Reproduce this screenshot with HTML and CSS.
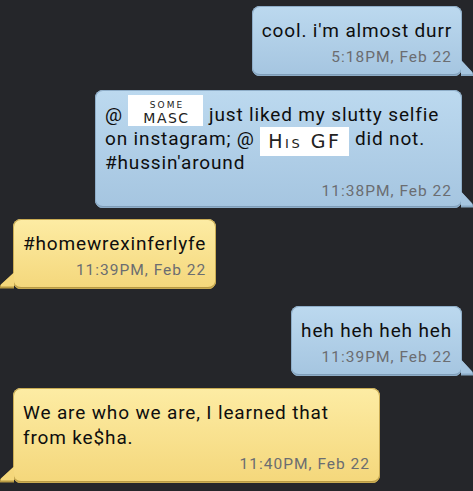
FILE: index.html
```html
<!DOCTYPE html>
<html>
<head>
<meta charset="utf-8">
<link rel="stylesheet" href="styles.css">
</head>
<body>
<div class="thread">
  <div class="row out r1">
    <div class="bubble blue">
      <div class="msg">cool. i'm almost durr</div>
      <div class="time">5:18PM, Feb 22</div>
    </div>
  </div>
  <div class="row out r2">
    <div class="bubble blue wide b2">
      <div class="msg">@ <span class="tag tag1"><span class="small">Some</span><span class="big">Masc</span></span> just liked my slutty selfie<br>on instagram; @ <span class="tag tag2">His GF</span> did not.<br>#hussin'around</div>
      <div class="time">11:38PM, Feb 22</div>
    </div>
  </div>
  <div class="row in r3">
    <div class="bubble yellow">
      <div class="msg">#homewrexinferlyfe</div>
      <div class="time">11:39PM, Feb 22</div>
    </div>
  </div>
  <div class="row out r4">
    <div class="bubble blue">
      <div class="msg">heh heh heh heh</div>
      <div class="time">11:39PM, Feb 22</div>
    </div>
  </div>
  <div class="row in r5">
    <div class="bubble yellow wide">
      <div class="msg">We are who we are, I learned that from ke$ha.</div>
      <div class="time">11:40PM, Feb 22</div>
    </div>
  </div>
</div>
</body>
</html>
```
FILE: styles.css
```css
html, body {
  margin: 0;
  padding: 0;
  background: #25262a;
  height: 100%;
}
body {
  font-family: Roboto, "Noto Sans", sans-serif;
  color: #0e0e0e;
}
.thread {
  display: flex;
  flex-direction: column;
  padding-top: 6px;
}
.row {
  display: flex;
}
.row.out {
  justify-content: flex-end;
  padding-right: 11px;
}
.row.in {
  justify-content: flex-start;
  padding-left: 13px;
}
.r2 { margin-top: 14px; }
.r3 { margin-top: 11px; }
.r4 { margin-top: 17px; }
.r5 { margin-top: 12px; }

.bubble {
  position: relative;
  border-radius: 8px;
  padding: 12px 10px 9px 10px;
  display: flex;
  flex-direction: column;
}
.blue {
  background: linear-gradient(#bcd9ef, #a5c5e0);
  box-shadow: inset 0 0 0 1px #8eadc8, inset 0 -2px 0 #7f9db8;
}
.yellow {
  background: linear-gradient(#fdeca4, #f4d77b);
  box-shadow: inset 0 0 0 1px #c9ab53, inset 0 -2px 0 #b89a44;
}
.blue::after {
  content: "";
  position: absolute;
  right: -11px;
  bottom: 0;
  width: 12px;
  height: 16px;
  background: #8aa9c4;
  clip-path: polygon(0 0, 100% 80%, 100% 100%, 0 100%);
}
.blue::before {
  content: "";
  position: absolute;
  right: -10px;
  bottom: 2px;
  width: 11px;
  height: 14px;
  background: #a6c5df;
  clip-path: polygon(0 0, 100% 86%, 100% 100%, 0 100%);
  z-index: 1;
}
.yellow::after {
  content: "";
  position: absolute;
  left: -13px;
  bottom: 0;
  width: 14px;
  height: 16px;
  background: #b89a44;
  clip-path: polygon(100% 0, 0 80%, 0 100%, 100% 100%);
}
.yellow::before {
  content: "";
  position: absolute;
  left: -12px;
  bottom: 2px;
  width: 13px;
  height: 14px;
  background: #f4d77b;
  clip-path: polygon(100% 0, 0 86%, 0 100%, 100% 100%);
  z-index: 1;
}
.msg {
  font-size: 19px;
  line-height: 25px;
  letter-spacing: 0.85px;
}
.time {
  font-size: 15.5px;
  line-height: 19px;
  letter-spacing: 1px;
  color: #6b6d71;
  text-align: right;
  margin-top: 5px;
}
.wide {
  width: 367px;
  box-sizing: border-box;
}
.b2 {
  padding-bottom: 7px;
}
.b2 .msg {
  line-height: 24px;
}
.b2 .time {
  margin-top: 7px;
}
.tag {
  display: inline-block;
  overflow: hidden;
  background: #fff;
  color: #222;
  font-family: "DejaVu Sans", sans-serif;
  text-align: center;
  letter-spacing: 0;
}
.tag1 {
  width: 75px;
  height: 31px;
  margin-top: -7px;
  vertical-align: -5.5px;
  line-height: 1;
  text-transform: uppercase;
}
.tag1 .small {
  display: block;
  font-size: 9px;
  margin-top: 6px;
  letter-spacing: 2px;
  padding-left: 2px;
}
.tag1 .big {
  display: block;
  font-size: 14px;
  margin-top: 1px;
  letter-spacing: 1.5px;
  padding-left: 1px;
}
.tag2 {
  width: 89px;
  height: 29px;
  margin-bottom: -6px;
  vertical-align: -5.5px;
  line-height: 29px;
  font-size: 19px;
  font-variant: small-caps;
  letter-spacing: 2.5px;
}
```
